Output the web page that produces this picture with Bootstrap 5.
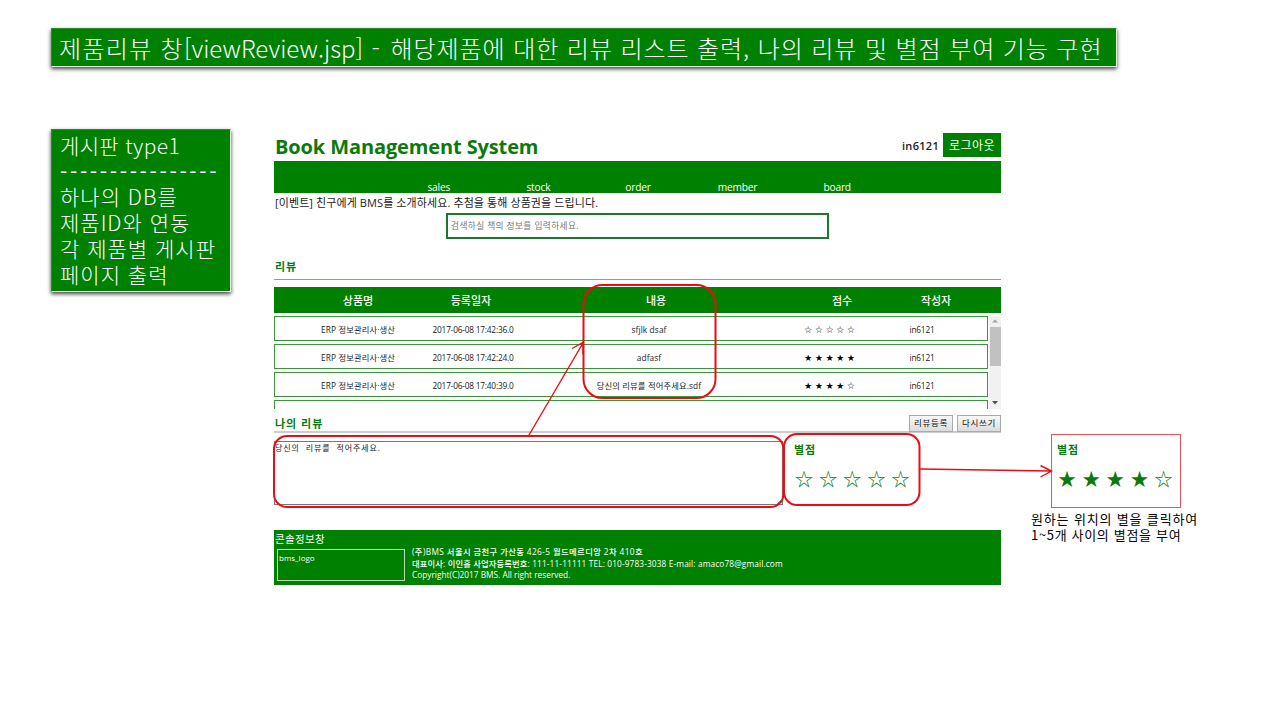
<!DOCTYPE html>
<html lang="ko">
<head>
<meta charset="utf-8">
<title>viewReview.jsp</title>
<link href="https://cdn.jsdelivr.net/npm/bootstrap@5.3.0/dist/css/bootstrap.min.css" rel="stylesheet">
<style>
body{margin:0;background:#fff;color:#222;font-family:"Open Sans","Noto Sans CJK KR",sans-serif;overflow:hidden}
.slide{width:1280px;height:720px;overflow:hidden}
.green{background:#008000;color:#fff}
.green-ink{color:#0b7a0b}
.note{border:1px solid #e4f3dc;border-top-color:#2d8a2d;border-left-color:#2d8a2d;box-shadow:0 2px 4px rgba(0,0,0,.75);font-family:"Noto Sans CJK KR",sans-serif;font-weight:300;white-space:nowrap}
.slide-title{height:39px;width:1066px;margin:28px 0 0 51px;padding-left:7px;font-size:24px;line-height:37px;letter-spacing:.92px}
.slide-title .lead-in{letter-spacing:1.3px}
.slide-title .latin{letter-spacing:0}
.slide-title .dash{letter-spacing:2px}
.side-note{width:180px;height:163px;padding:3px 0 0 8px;font-size:21px;line-height:25.7px;letter-spacing:1px}
.side-note .latin{letter-spacing:.36px}
.side-note .dashes{letter-spacing:2.64px;font-weight:400}
.stage{margin:62px 0 0 51px}
.app{width:727px;margin-left:43px;white-space:nowrap}
.app-head{height:32px;padding-left:1px}
.brand-name{font-size:20px;font-weight:700;line-height:36px;letter-spacing:-.12px}
.user-id{font-size:11px;font-weight:600;line-height:34px;margin-right:4px;letter-spacing:.3px}
.logout{width:58px;height:24px;margin-top:4px;font-size:12px;line-height:25px;letter-spacing:.46px}
.menu{height:32px;display:grid;grid-template-columns:repeat(5,99.6px);padding:19px 0 0 115px;font-size:10.2px;line-height:14px;letter-spacing:-.2px}
.event{height:20px;font-size:11px;line-height:19px;padding-left:1px;letter-spacing:.1px}
.search-box{width:383px;height:26px;margin-left:172px;border:2px solid #1a7a2a;color:#777;font-size:8.7px;line-height:22px;padding-left:3px;letter-spacing:.39px}
.sec{font-size:11px;font-weight:600;padding-left:1px;line-height:18px;letter-spacing:1px}
.sec-review{height:41px;padding-top:19px;border-bottom:1px solid #999}
.cols{display:grid;text-align:center}
.thead-row{height:26px;margin-top:7px;grid-template-columns:112px 114px 256px 116px 72px;padding-left:28px;font-size:11px;font-weight:500;line-height:27px}
.list-area{height:93px;margin-top:3px;overflow:hidden}
.list-rows{width:715px}
.item{width:714px;height:25px;margin-bottom:3px;border:1px solid #3a963a;grid-template-columns:114px 116px 236px 126px 58px;padding-left:26px;font-size:8.3px;line-height:25px;letter-spacing:.12px}
.item .stamp,.item .who{letter-spacing:-.2px}
.tiny-stars{font-family:"Noto Sans CJK KR",sans-serif;font-size:7.4px;color:#000;letter-spacing:.83px;line-height:24px}
.bar{width:12px;background:#f1f1f1}
.thumb{width:11px;height:39px;background:#c1c1c1}
.mine{height:24px;border-bottom:2px solid #ccc}
.mine .sec{line-height:29px}
.mini-btn{width:44px;height:17px;margin:6px 0 0 4px;border:1px solid #aaa;background:linear-gradient(#f8f8f8,#dcdcdc);font-size:8.5px;line-height:14px;text-align:center;color:#111;letter-spacing:.68px}
.write{height:65px;margin-top:8px}
.write-area{width:509px;height:64px;border:1px solid #777;font-size:8px;line-height:11px;color:#222;letter-spacing:.9px;word-spacing:3px}
.rate{margin-left:11px}
.rate-title{font-size:11px;font-weight:600;line-height:17px;letter-spacing:1px}
.big-stars{font-family:"Noto Sans CJK KR",sans-serif;font-size:18px;line-height:26px;color:#0b7a0b;margin:7px 0 0 1px;letter-spacing:1.05px}
.foot{height:55px;margin-top:24px}
.foot-title{height:19px;font-size:10.5px;line-height:18px;padding-left:1px;letter-spacing:.34px}
.logo-box{width:128px;height:32px;margin-left:3px;border:1px solid #b9dcb0;font-size:8px;line-height:15px;padding-left:1px}
.foot-info{margin:-3px 0 0 7px;font-size:8.3px;line-height:11.5px;font-weight:500}
.foot-info .address{letter-spacing:.4px}
.foot-info .contact{letter-spacing:.13px}
.callout{margin:305px 0 0 30px;white-space:nowrap}
.callout-box{width:130px;height:74px;margin-left:20px;border:1px solid #f0525a;padding:6px 0 0 5px}
.callout-box .big-stars{margin-left:1px}
.callout-text{font-size:13px;line-height:16px;color:#000;margin-top:3px;font-family:"Noto Sans CJK KR",sans-serif;letter-spacing:.84px}
.callout-text .second{letter-spacing:.67px}
.marks{left:0;top:0}
</style>
</head>
<body>
<div class="slide position-relative">
  <div class="note green slide-title"><span class="lead-in">제품리뷰 창</span><span class="latin">[viewReview.jsp]</span><span class="dash"> - </span>해당제품에 대한 리뷰 리스트 출력, 나의 리뷰 및 별점 부여 기능 구현</div>
  <div class="stage d-flex align-items-start">
    <aside class="note green side-note">
      <div class="latin">게시판 type1</div>
      <div class="dashes">----------------</div>
      <div>하나의 DB를</div>
      <div>제품ID와 연동</div>
      <div>각 제품별 게시판</div>
      <div>페이지 출력</div>
    </aside>
    <main class="app">
      <header class="app-head d-flex align-items-start">
        <div class="brand-name green-ink me-auto">Book Management System</div>
        <div class="user-id">in6121</div>
        <div class="logout green text-center">로그아웃</div>
      </header>
      <nav class="menu green text-center"><span>sales</span><span>stock</span><span>order</span><span>member</span><span>board</span></nav>
      <div class="event">[이벤트] 친구에게 BMS를 소개하세요. 추첨을 통해 상품권을 드립니다.</div>
      <div class="search-box">검색하실 책의 정보를 입력하세요.</div>
      <div class="sec sec-review green-ink">리뷰</div>
      <div class="cols thead-row green"><span>상품명</span><span>등록일자</span><span>내용</span><span>점수</span><span>작성자</span></div>
      <div class="list-area d-flex">
        <div class="list-rows">
          <div class="cols item"><span>ERP 정보관리사·생산</span><span class="stamp">2017-06-08 17:42:36.0</span><span>sfjlk dsaf</span><span class="tiny-stars">☆ ☆ ☆ ☆ ☆</span><span class="who">in6121</span></div>
          <div class="cols item"><span>ERP 정보관리사·생산</span><span class="stamp">2017-06-08 17:42:24.0</span><span>adfasf</span><span class="tiny-stars">★ ★ ★ ★ ★</span><span class="who">in6121</span></div>
          <div class="cols item"><span>ERP 정보관리사·생산</span><span class="stamp">2017-06-08 17:40:39.0</span><span>당신의 리뷰를 적어주세요.sdf</span><span class="tiny-stars">★ ★ ★ ★ ☆</span><span class="who">in6121</span></div>
          <div class="cols item"></div>
        </div>
        <div class="bar d-flex flex-column align-items-center">
          <svg width="12" height="11"><path d="M3 6.500h6L6 3.500z" fill="#a3a3a3"/></svg>
          <div class="thumb"></div>
          <svg class="mt-auto" width="12" height="11"><path d="M3 3h6L6 6.500z" fill="#505050"/></svg>
        </div>
      </div>
      <div class="mine d-flex align-items-start">
        <div class="sec green-ink me-auto">나의 리뷰</div>
        <div class="mini-btn">리뷰등록</div><div class="mini-btn">다시쓰기</div>
      </div>
      <div class="write d-flex align-items-start">
        <div class="write-area">당신의 리뷰를 적어주세요.</div>
        <div class="rate"><div class="rate-title green-ink">별점</div><div class="big-stars">☆ ☆ ☆ ☆ ☆</div></div>
      </div>
      <footer class="foot green">
        <div class="foot-title">콘솔정보창</div>
        <div class="d-flex align-items-start">
          <div class="logo-box">bms_logo</div>
          <div class="foot-info">
            <div class="address">(주)BMS 서울시 금천구 가산동 426-5 월드메르디앙 2차 410호</div>
            <div class="contact">대표이사: 이인홀 사업자등록번호: 111-11-11111 TEL: 010-9783-3038 E-mail: amaco78@gmail.com</div>
            <div>Copyright(C)2017 BMS. All right reserved.</div>
          </div>
        </div>
      </footer>
    </main>
    <aside class="callout">
      <div class="callout-box"><div class="rate-title green-ink">별점</div><div class="big-stars">★ ★ ★ ★ ☆</div></div>
      <div class="callout-text"><div>원하는 위치의 별을 클릭하여</div><div class="second">1~5개 사이의 별점을 부여</div></div>
    </aside>
  </div>
  <svg class="marks position-absolute" width="1280" height="720" fill="none" stroke="#ea0d14" stroke-width="2">
    <rect x="583.500" y="285" width="132" height="113" rx="19"/>
    <rect x="274" y="436" width="509.500" height="71" rx="13"/>
    <rect x="784" y="434" width="135.500" height="71" rx="13"/>
    <path d="M529 435L583 343M572 348.500l11-6v12" stroke-width="1.400"/>
    <path d="M920 469L1051 471M1040.500 465.500l11 5.500l-11 6" stroke-width="1.400"/>
    <path d="M777 504l5-5M780 504l2-2" stroke="#888" stroke-width="1"/>
  </svg>
</div>
</body>
</html>
